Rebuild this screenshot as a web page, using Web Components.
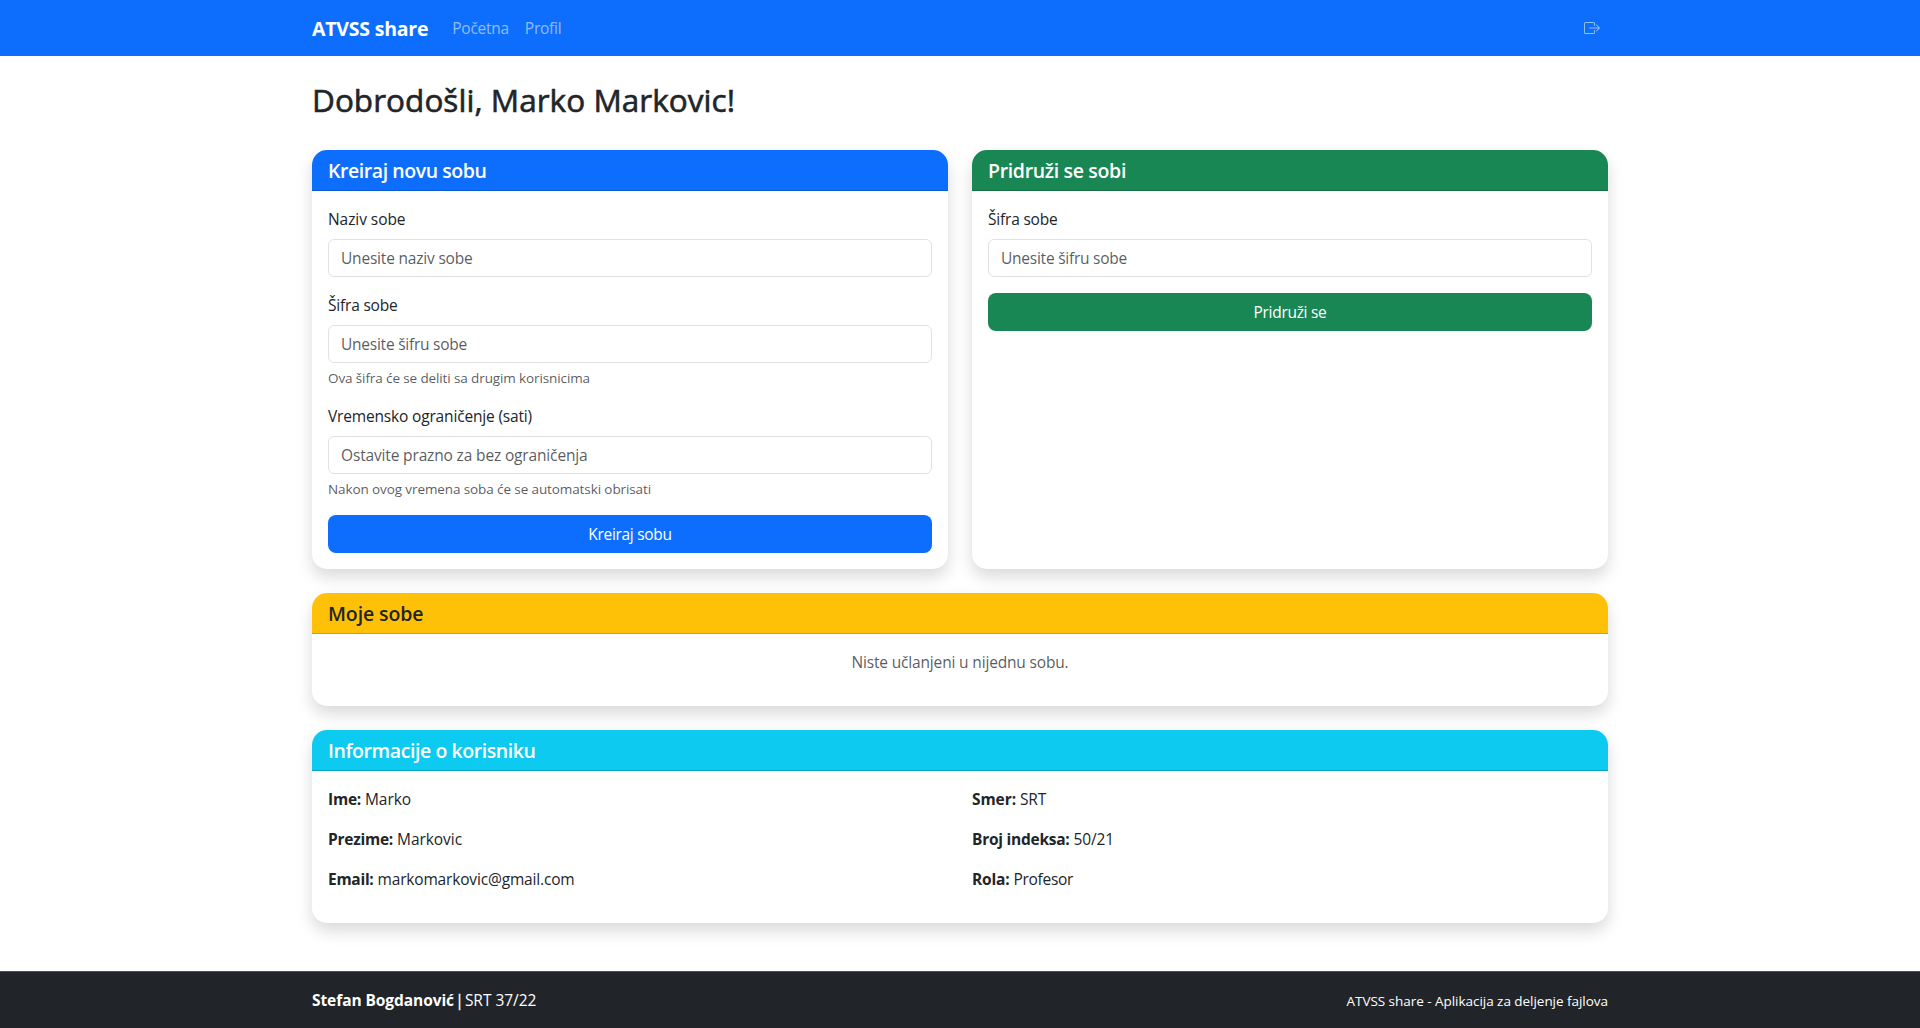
<!DOCTYPE html>
<html lang="sr-Latn">
<head>
<meta charset="utf-8">
<title>ATVSS share</title>
<style>
body{margin:0;background:#fff;color:#212529;font:400 15.5px/24px "Segoe UI","Open Sans","Noto Sans",sans-serif}
</style>
</head>
<body>
<room-app></room-app>
<script>
const pen = document.createElement('canvas').getContext('2d');
// Letter spacing that makes a text take the given advance width.
function tracking(text, style, width) {
  pen.font = `${style.fontWeight} ${style.fontSize} ${style.fontFamily}`;
  return (width - pen.measureText(text).width) / text.length;
}
function define(name, html, init) {
  const t = document.createElement('template');
  t.innerHTML = html;
  customElements.define(name, class extends HTMLElement {
    connectedCallback() {
      if (this.shadowRoot) return;
      this.attachShadow({mode: 'open'}).append(t.content.cloneNode(true));
      if (init) init.call(this, this.shadowRoot);
    }
  });
}

define('fit-text', `<style>:host{display:inline-block;white-space:nowrap}</style><slot></slot>`, function () {
  this.style.letterSpacing = tracking(this.textContent, getComputedStyle(this), +this.getAttribute('w')) + 'px';
});

define('nav-bar', `<style>
:host{display:block;background:#0d6efd;color:#fff}
nav{box-sizing:border-box;width:1296px;height:56px;margin:0 auto;display:flex;align-items:center}
.brand{font-size:19.5px;font-weight:700;line-height:30px;margin-right:16px;padding-top:2px}
.links{display:flex;flex:1}
a{color:rgba(255,255,255,.55);padding:8px;display:block;text-decoration:none}
svg{display:block;width:16px;height:16px}
</style>
<nav><fit-text class="brand" w="116.3">ATVSS share</fit-text>
<div class="links"><a><fit-text w="56.5">Početna</fit-text></a><a><fit-text w="36.5">Profil</fit-text></a></div>
<a><svg viewBox="0 0 16 16" fill="currentColor" fill-rule="evenodd"><path d="M10 12.5a.5.5 0 0 1-.5.5h-8a.5.5 0 0 1-.5-.5v-9a.5.5 0 0 1 .5-.5h8a.5.5 0 0 1 .5.5v2a.5.5 0 0 0 1 0v-2A1.5 1.5 0 0 0 9.5 2h-8A1.5 1.5 0 0 0 0 3.5v9A1.5 1.5 0 0 0 1.5 14h8a1.5 1.5 0 0 0 1.5-1.5v-2a.5.5 0 0 0-1 0z"/><path d="M15.854 8.354a.5.5 0 0 0 0-.708l-3-3a.5.5 0 0 0-.708.708L14.293 7.5H5.5a.5.5 0 0 0 0 1h8.793l-2.147 2.146a.5.5 0 0 0 .708.708z"/></svg></a></nav>`);

define('info-card', `<style>
:host{display:block;background:#fff;border-radius:15px;box-shadow:0 8px 16px rgba(0,0,0,.15);overflow:hidden}
header{background:var(--head);color:var(--ink,#fff);padding:9px 16px 7px;border-bottom:1px solid rgba(0,0,0,.176);font-size:19.5px;font-weight:600;height:24px;line-height:24px}
.body{padding:16px}
</style><header><slot name="title"></slot></header><div class="body"><slot></slot></div>`);

define('form-field', `<style>
:host{display:block;margin-bottom:16px}
label{display:block;height:24px;margin-bottom:8px}
input{display:block;box-sizing:border-box;width:100%;height:38px;padding:6px 12px;border:1px solid #dee2e6;border-radius:6px;background:#fff;font:inherit;line-height:24px;color:#212529;outline:0}
input::placeholder{color:rgba(33,37,41,.75);opacity:1;letter-spacing:var(--ls)}
.help{padding-top:5px;font-size:13.5px;line-height:21px;height:20px;color:rgba(33,37,41,.75)}
</style><label><slot name="label"></slot></label><input><div class="help"><slot name="help"></slot></div>`, function (root) {
  const input = root.querySelector('input');
  const text = this.getAttribute('placeholder');
  input.placeholder = text;
  input.style.setProperty('--ls', tracking(text, getComputedStyle(input), +this.getAttribute('w')) + 'px');
  if (!this.querySelector('[slot=help]')) root.querySelector('.help').remove();
});

define('action-button', `<style>
:host{display:block}
button{display:block;box-sizing:border-box;width:100%;height:38px;border:0;border-radius:8px;padding:7px 12px;background:var(--bg);color:#fff;font:inherit;line-height:24px;text-align:center}
</style><button><slot></slot></button>`);

define('info-row', `<style>
:host{display:flex;gap:4px;height:24px;margin-bottom:16px}
::slotted([slot=key]){font-weight:700}
</style><slot name="key"></slot><slot></slot>`);

define('page-footer', `<style>
:host{display:block;background:#212529;border-top:1px solid #4d5154;color:#fff}
div{width:1296px;margin:0 auto;height:56px;display:flex;align-items:center}
.name{font-weight:700}
.bar{margin:0 1.2px;-webkit-text-stroke:.3px #fff}
.app{font-size:13.5px;margin-left:auto;padding-top:2px}
</style><div><fit-text class="name" w="142">Stefan Bogdanović</fit-text><fit-text class="bar" w="8.5">|</fit-text><fit-text w="71.5">SRT 37/22</fit-text><fit-text class="app" w="261.5">ATVSS share - Aplikacija za deljenje fajlova</fit-text></div>`);

define('room-app', `<style>
:host{display:flex;flex-direction:column;height:1028px}
main{width:1296px;margin:0 auto;padding-top:25px;flex:1}
h2{font-size:31.5px;font-weight:500;line-height:38.4px;height:38.4px;margin:0 0 31px;-webkit-text-stroke:.6px #212529}
.pair{display:grid;grid-template-columns:1fr 1fr;gap:24px}
info-card{margin-bottom:24px}
.empty{margin:0 0 16px;text-align:center;color:rgba(33,37,41,.75);height:24px}
.cols{display:grid;grid-template-columns:1fr 1fr;gap:24px}
</style>
<nav-bar></nav-bar>
<main>
<h2><fit-text w="423">Dobrodošli, Marko Markovic!</fit-text></h2>
<div class="pair">
<info-card style="--head:#0d6efd"><fit-text slot="title" w="158.5">Kreiraj novu sobu</fit-text>
<form-field placeholder="Unesite naziv sobe" w="131.5"><fit-text slot="label" w="77.5">Naziv sobe</fit-text></form-field>
<form-field placeholder="Unesite šifru sobe" w="126"><fit-text slot="label" w="69.5">Šifra sobe</fit-text><fit-text slot="help" w="262">Ova šifra će se deliti sa drugim korisnicima</fit-text></form-field>
<form-field placeholder="Ostavite prazno za bez ograničenja" w="246.5"><fit-text slot="label" w="204">Vremensko ograničenje (sati)</fit-text><fit-text slot="help" w="323">Nakon ovog vremena soba će se automatski obrisati</fit-text></form-field>
<action-button style="--bg:#0d6efd"><fit-text w="83.5">Kreiraj sobu</fit-text></action-button>
</info-card>
<info-card style="--head:#198754"><fit-text slot="title" w="138">Pridruži se sobi</fit-text>
<form-field placeholder="Unesite šifru sobe" w="126"><fit-text slot="label" w="69.5">Šifra sobe</fit-text></form-field>
<action-button style="--bg:#198754"><fit-text w="73">Pridruži se</fit-text></action-button>
</info-card>
</div>
<info-card style="--head:#ffc107;--ink:#212529"><fit-text slot="title" w="95.5">Moje sobe</fit-text>
<p class="empty"><fit-text w="217">Niste učlanjeni u nijednu sobu.</fit-text></p></info-card>
<info-card style="--head:#0dcaf0"><fit-text slot="title" w="207.5">Informacije o korisniku</fit-text>
<div class="cols"><div>
<info-row><fit-text slot="key" w="33">Ime:</fit-text><fit-text w="46">Marko</fit-text></info-row>
<info-row><fit-text slot="key" w="65">Prezime:</fit-text><fit-text w="65">Markovic</fit-text></info-row>
<info-row><fit-text slot="key" w="45.5">Email:</fit-text><fit-text w="197">markomarkovic@gmail.com</fit-text></info-row>
</div><div>
<info-row><fit-text slot="key" w="44">Smer:</fit-text><fit-text w="26">SRT</fit-text></info-row>
<info-row><fit-text slot="key" w="97.5">Broj indeksa:</fit-text><fit-text w="40.5">50/21</fit-text></info-row>
<info-row><fit-text slot="key" w="37.5">Rola:</fit-text><fit-text w="59.5">Profesor</fit-text></info-row>
</div></div></info-card>
</main>
<page-footer></page-footer>`);
</script>
</body>
</html>
